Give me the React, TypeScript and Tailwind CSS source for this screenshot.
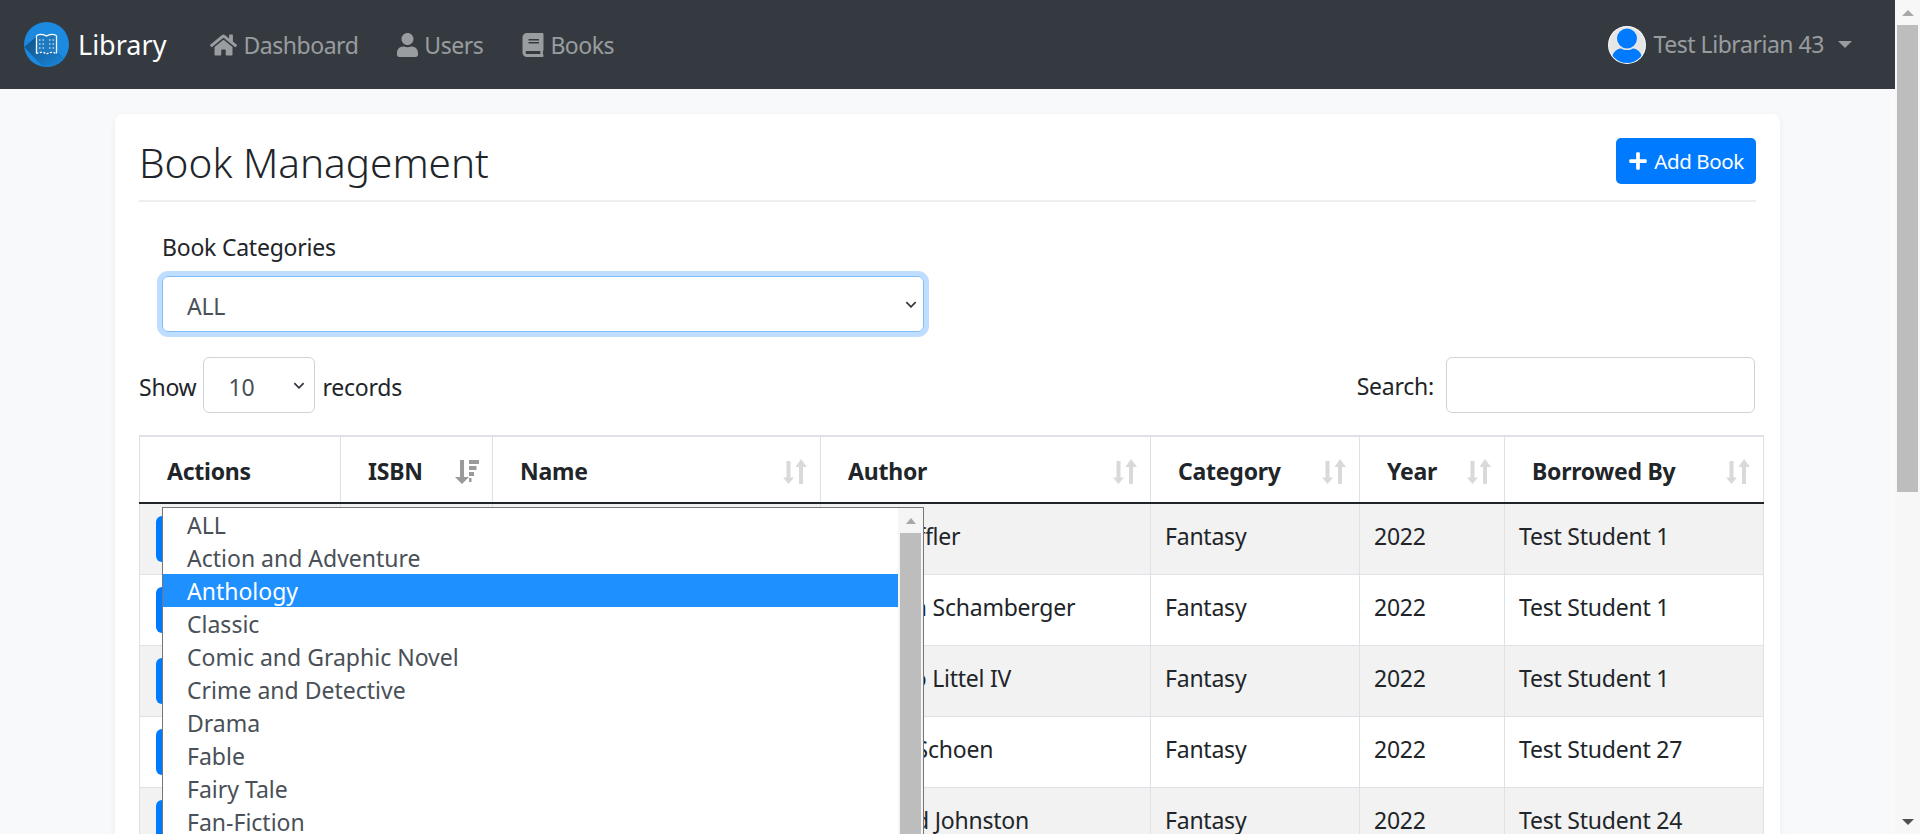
import { FaBook, FaHome, FaPlus, FaUser } from "react-icons/fa";

const CATEGORIES = [
  "ALL",
  "Action and Adventure",
  "Anthology",
  "Classic",
  "Comic and Graphic Novel",
  "Crime and Detective",
  "Drama",
  "Fable",
  "Fairy Tale",
  "Fan-Fiction",
  "Fantasy",
];

const ROWS = [
  { author: "Bob Stoffler", borrowedBy: "Test Student 1" },
  { author: "Brandon Schamberger", borrowedBy: "Test Student 1" },
  { author: "Mr. Otho Littel IV", borrowedBy: "Test Student 1" },
  { author: "Elmore Schoen", borrowedBy: "Test Student 27" },
  { author: "Mr. Floyd Johnston", borrowedBy: "Test Student 24" },
];

const COLUMNS = [
  { label: "Actions", width: "w-[201px]", sort: "none" },
  { label: "ISBN", width: "w-[152px]", sort: "active" },
  { label: "Name", width: "w-[328px]", sort: "idle" },
  { label: "Author", width: "w-[330px]", sort: "idle" },
  { label: "Category", width: "w-[209px]", sort: "idle" },
  { label: "Year", width: "w-[145px]", sort: "idle" },
  { label: "Borrowed By", width: "w-[259px]", sort: "idle" },
];

function Logo() {
  return (
    <svg viewBox="0 0 45 45" className="h-[45px] w-[45px]">
      <defs>
        <linearGradient id="logo-shadow" x1="0.2" y1="0.2" x2="0.85" y2="0.85">
          <stop offset="0" stopColor="#125c96" />
          <stop offset="1" stopColor="#1b8ae0" />
        </linearGradient>
        <clipPath id="logo-clip">
          <circle cx="22.5" cy="22.5" r="22.5" />
        </clipPath>
      </defs>
      <circle cx="22.5" cy="22.5" r="22.5" fill="#1b8ae0" />
      <polygon points="12,15 33,15 33,29 50,46 24,50 0,25" fill="url(#logo-shadow)" clipPath="url(#logo-clip)" />
      <path d="M12.5 13.5c3-1.500 7-1.500 10 .5 3-2 7-2 10-.5v18c-3-1.500-7-1.500-10 .5-3-2-7-2-10-.5z" fill="#1f79bf" />
      <path d="M12.500 13.500v18M32.500 13.500v18" stroke="#fff" strokeWidth="1.3" fill="none" />
      <path d="M12.500 13.500c3-1.500 7-1.500 10 .5 3-2 7-2 10-.5" stroke="#fff" strokeWidth="1.3" fill="none" />
      <path d="M12.500 31.500c3-1.500 7-1.500 10 .5 3-2 7-2 10-.5" stroke="#fff" strokeWidth="1.3" strokeDasharray="2 1.5" fill="none" />
      <path d="M15 18h5M15 22h5M15 26h5M25 18h5M25 22h5M25 26h5" stroke="#fff" strokeWidth="1.2" strokeDasharray="1.500 2" fill="none" />
    </svg>
  );
}

function Avatar() {
  return (
    <svg viewBox="0 0 38 38" className="h-[38px] w-[38px]">
      <defs>
        <clipPath id="avatar-clip">
          <circle cx="19" cy="19" r="18" />
        </clipPath>
      </defs>
      <circle cx="19" cy="19" r="19" fill="#ffffff" />
      <circle cx="19" cy="19" r="18" fill="#e6e6e6" />
      <circle cx="19" cy="12.500" r="10" fill="#007bff" />
      <path
        d="M4 33c0-6 4-10 9-10.500 3.500 2 8.500 2 12 0 5 .5 9 4.500 9 10.500v6h-30z"
        fill="#007bff"
        clipPath="url(#avatar-clip)"
      />
    </svg>
  );
}

function Chevron() {
  return (
    <svg viewBox="0 0 10 6" className="h-[7px] w-[12px]">
      <path d="M1 1l4 4 4-4" stroke="#343a40" strokeWidth="1.5" fill="none" />
    </svg>
  );
}

function SortIcon({ sort }: { sort: string }) {
  if (sort === "active") {
    return (
      <svg viewBox="0 0 24 25" className="h-[25px] w-[24px]" fill="#9a9a9a">
        <path d="M5 1h4v17h5l-7 7-7-7h5z" />
        <path d="M14 1h10v4h-10zM14 7h7.500v4h-7.500zM14 13h5v4h-5zM14 19h2.500v4h-2.500z" />
      </svg>
    );
  }
  if (sort === "idle") {
    return (
      <svg viewBox="0 0 24 25" className="h-[25px] w-[24px]" fill="#d9d9d9">
        <path d="M3.500 2h4v16.500h3.500l-5.500 6.500-5.500-6.500h3.500z" />
        <path d="M16 25h4v-17h4l-6-8-5.500 8h3.500z" />
      </svg>
    );
  }
  return null;
}

function NavLink({ icon, label }: { icon: React.ReactNode; label: string }) {
  return (
    <a className="flex items-center gap-[6px] text-[rgba(255,255,255,0.5)]">
      {icon}
      <span className="pt-[2px]">{label}</span>
    </a>
  );
}

function CategoryMenu() {
  return (
    <div className="absolute left-[-1px] top-[230px] z-10 flex w-[762px] overflow-hidden border border-[#767676] bg-white tracking-normal text-[#495057]">
      <ul className="flex-1">
        {CATEGORIES.map((category) => (
          <li
            key={category}
            className={`h-[33px] pl-[24px] leading-[35px] ${category === "Anthology" ? "bg-[#1e90ff] text-white" : ""}`}
          >
            {category}
          </li>
        ))}
      </ul>
      <div className="w-[25px] bg-[#f5f5f5]">
        <div className="flex h-[25px] items-center justify-center">
          <div className="h-0 w-0 border-x-[5px] border-b-[6px] border-x-transparent border-b-[#a8a8a8]" />
        </div>
        <div className="ml-[2px] h-[400px] w-[21px] bg-[#bdbdbd]" />
      </div>
    </div>
  );
}

function BooksTable() {
  return (
    <table className="w-[1624px] table-fixed border-collapse">
      <thead>
        <tr className="h-[67px] border-x border-t-2 border-[#dee2e6]">
          {COLUMNS.map((col) => (
            <th key={col.label} className={`${col.width} border-x border-b-2 border-x-[#dee2e6] border-b-[#212529] p-0 font-bold text-[#212529]`}>
              <div className="flex items-center justify-between pl-[27px] pr-[13px] pt-[4px]">
                <span>{col.label}</span>
                <SortIcon sort={col.sort} />
              </div>
            </th>
          ))}
        </tr>
      </thead>
      <tbody>
        {ROWS.map((row, i) => (
          <tr key={row.author} className={`h-[71px] border border-[#dee2e6] ${i % 2 === 0 ? "bg-[#f2f2f2]" : "bg-white"}`}>
            <td className="border border-[#dee2e6] pl-[16px]">
              <div className="h-[46px] w-[60px] rounded-[6px] bg-[#007bff]" />
            </td>
            <td className="border border-[#dee2e6]" />
            <td className="border border-[#dee2e6]" />
            <td className="whitespace-nowrap border border-[#dee2e6] pb-[5px] pl-[14px]">{row.author}</td>
            <td className="border border-[#dee2e6] pb-[5px] pl-[14px]">Fantasy</td>
            <td className="border border-[#dee2e6] pb-[5px] pl-[14px]">2022</td>
            <td className="border border-[#dee2e6] pb-[5px] pl-[14px]">{row.borrowedBy}</td>
          </tr>
        ))}
      </tbody>
    </table>
  );
}

function PageScrollbar() {
  return (
    <div className="flex w-[25px] shrink-0 flex-col bg-[#f7f7f7]">
      <div className="flex h-[25px] items-center justify-center">
        <div className="h-0 w-0 border-x-[6px] border-b-[6px] border-x-transparent border-b-[#a8a8a8]" />
      </div>
      <div className="ml-[2px] h-[467px] w-[21px] bg-[#bdbdbd]" />
      <div className="flex-1" />
      <div className="flex h-[25px] items-center justify-center">
        <div className="h-0 w-0 border-x-[6px] border-t-[6px] border-x-transparent border-t-[#505050]" />
      </div>
    </div>
  );
}

export default function App() {
  return (
    <div className="flex h-[834px] overflow-hidden bg-[#f8f9fa] font-['Noto_Sans',sans-serif] text-[23px] text-[#212529] tracking-[-0.01em]">
      <div className="min-w-0 flex-1">
        <nav className="flex h-[89px] items-center bg-[#343a40] pl-[24px] pr-[43px]">
          <Logo />
          <span className="ml-[9px] pt-[2px] text-[27px] tracking-normal text-white">Library</span>
          <div className="ml-[44px] flex items-center gap-[39px] tracking-[-0.02em]">
            <NavLink icon={<FaHome className="h-[24px] w-[27px]" />} label="Dashboard" />
            <NavLink icon={<FaUser className="h-[24px] w-[21px]" />} label="Users" />
            <NavLink icon={<FaBook className="h-[24px] w-[22px]" />} label="Books" />
          </div>
          <div className="ml-auto flex items-center tracking-[-0.02em] text-[rgba(255,255,255,0.5)]">
            <Avatar />
            <span className="ml-[7px]">Test Librarian 43</span>
            <div className="ml-[14px] h-0 w-0 border-x-[7px] border-t-[7px] border-x-transparent border-t-[rgba(255,255,255,0.5)]" />
          </div>
        </nav>
        <main className="pl-[115px] pr-[115px] pt-[25px]">
          <div className="rounded-t-[8px] bg-white px-[24px] pt-[24px] shadow-[0_2px_6px_rgba(0,0,0,0.06)]">
            <div className="flex items-start justify-between border-b-2 border-[#eeeeee] pb-[14px]">
              <h1 className="pt-[2px] text-[40.5px] font-light leading-[46px] tracking-normal">Book Management</h1>
              <button className="flex h-[46px] w-[140px] items-center justify-center gap-[6px] rounded-[5px] bg-[#007bff] text-[20.5px] tracking-[-0.02em] text-white">
                <FaPlus className="h-[20px] w-[20px]" />
                Add Book
              </button>
            </div>
            <div className="ml-[23px] mt-[22px] w-[762px]">
              <label className="block h-[52px] leading-[46px]">Book Categories</label>
              <div className="relative flex h-[56px] items-center justify-between rounded-[6px] border border-[#80bdff] pl-[24px] pr-[6px] text-[#495057] shadow-[0_0_0_5px_rgba(0,123,255,0.25)]">
                <span className="pt-[4px]">ALL</span>
                <Chevron />
                <CategoryMenu />
              </div>
            </div>
            <div className="mt-[25px] flex items-center justify-between pr-[1px]">
              <div className="flex items-center gap-[7px]">
                <span className="pt-[4px]">Show</span>
                <div className="flex h-[56px] w-[112px] items-center justify-between rounded-[6px] border border-[#ced4da] pl-[24px] pr-[9px] text-[#495057]">
                  <span className="pt-[4px]">10</span>
                  <Chevron />
                </div>
                <span className="pt-[4px]">records</span>
              </div>
              <div className="flex items-center gap-[12px]">
                <span className="pt-[3px]">Search:</span>
                <input className="h-[56px] w-[309px] rounded-[6px] border border-[#ced4da] bg-white" />
              </div>
            </div>
            <div className="mt-[22px]">
              <BooksTable />
            </div>
          </div>
        </main>
      </div>
      <PageScrollbar />
    </div>
  );
}
